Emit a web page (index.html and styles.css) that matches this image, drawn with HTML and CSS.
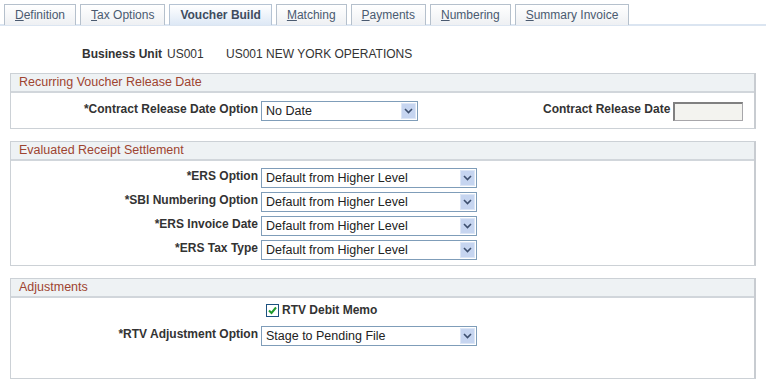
FILE: index.html
```html
<!DOCTYPE html>
<html>
<head>
  <title>Voucher Build</title>
  <link rel="stylesheet" href="styles.css">
</head>
<body>
  <div class="tabs">
    <div class="tab"><u>D</u>efinition</div>
    <div class="tab"><u>T</u>ax Options</div>
    <div class="tab active">Voucher Build</div>
    <div class="tab"><u>M</u>atching</div>
    <div class="tab"><u>P</u>ayments</div>
    <div class="tab"><u>N</u>umbering</div>
    <div class="tab"><u>S</u>ummary Invoice</div>
  </div>

  <div class="unit-row">
    <span class="unit-label">Business Unit</span>
    <span class="unit-code">US001</span>
    <span>US001 NEW YORK OPERATIONS</span>
  </div>

  <div class="group">
    <div class="group-title">Recurring Voucher Release Date</div>
    <div class="group-body body-release">
      <div class="row">
        <label class="field-label">*Contract Release Date Option</label>
        <div class="dropdown short">No Date<span class="arrow"><svg width="9" height="6" viewBox="0 0 9 6"><path d="M1 1l3.5 3.5L8 1" fill="none" stroke="#3d4f6e" stroke-width="1.6"/></svg></span></div>
        <span class="spacer"></span>
        <label class="field-label">Contract Release Date</label>
        <div class="date-box"></div>
      </div>
    </div>
  </div>

  <div class="group">
    <div class="group-title">Evaluated Receipt Settlement</div>
    <div class="group-body">
      <div class="row">
        <label class="field-label">*ERS Option</label>
        <div class="dropdown">Default from Higher Level<span class="arrow"><svg width="9" height="6" viewBox="0 0 9 6"><path d="M1 1l3.5 3.5L8 1" fill="none" stroke="#3d4f6e" stroke-width="1.6"/></svg></span></div>
      </div>
      <div class="row">
        <label class="field-label">*SBI Numbering Option</label>
        <div class="dropdown">Default from Higher Level<span class="arrow"><svg width="9" height="6" viewBox="0 0 9 6"><path d="M1 1l3.5 3.5L8 1" fill="none" stroke="#3d4f6e" stroke-width="1.6"/></svg></span></div>
      </div>
      <div class="row">
        <label class="field-label">*ERS Invoice Date</label>
        <div class="dropdown">Default from Higher Level<span class="arrow"><svg width="9" height="6" viewBox="0 0 9 6"><path d="M1 1l3.5 3.5L8 1" fill="none" stroke="#3d4f6e" stroke-width="1.6"/></svg></span></div>
      </div>
      <div class="row">
        <label class="field-label">*ERS Tax Type</label>
        <div class="dropdown">Default from Higher Level<span class="arrow"><svg width="9" height="6" viewBox="0 0 9 6"><path d="M1 1l3.5 3.5L8 1" fill="none" stroke="#3d4f6e" stroke-width="1.6"/></svg></span></div>
      </div>
    </div>
  </div>

  <div class="group">
    <div class="group-title">Adjustments</div>
    <div class="group-body body-adjust">
      <div class="row">
        <span class="field-label"></span>
        <span class="checkbox"><svg width="11" height="11" viewBox="0 0 11 11"><path d="M2 5.5l2.5 2.5L9 2.5" fill="none" stroke="#1f9a2c" stroke-width="2"/></svg></span>
        <span class="check-label">RTV Debit Memo</span>
      </div>
      <div class="row">
        <label class="field-label">*RTV Adjustment Option</label>
        <div class="dropdown">Stage to Pending File<span class="arrow"><svg width="9" height="6" viewBox="0 0 9 6"><path d="M1 1l3.5 3.5L8 1" fill="none" stroke="#3d4f6e" stroke-width="1.6"/></svg></span></div>
      </div>
    </div>
  </div>
</body>
</html>
```

FILE: styles.css
```css
body {
  margin: 0;
  font-family: "Liberation Sans", Arial, sans-serif;
  font-size: 12px;
  color: #333;
  background: #fff;
}
.tabs {
  display: flex;
  gap: 4px;
  padding: 4px 0 0 4px;
  height: 20px;
  border-bottom: 2px solid #dbe5f1;
}
.tab {
  height: 20px;
  line-height: 20px;
  padding: 0 10px;
  border: 1px solid #b5c0cc;
  border-bottom: none;
  background: linear-gradient(#ffffff, #eef0f3);
  color: #4a5a70;
}
.tab u {
  text-decoration-color: #4a5a70;
}
.tab.active {
  background: linear-gradient(#ffffff, #dde8f5);
  border-color: #b5c3d3;
  font-weight: bold;
  color: #3e4c5f;
}
.unit-row {
  display: flex;
  padding: 21px 0 0 82px;
  height: 16px;
  line-height: 14px;
}
.unit-label {
  font-weight: bold;
  margin-right: 5px;
}
.unit-code {
  width: 59px;
}
.group {
  margin: 10px 0 0 10px;
  width: 743px;
  border: 1px solid #ccd1d6;
  border-right: 2px solid #c8ccd1;
}
.group + .group {
  margin-top: 12px;
}
.group-title {
  height: 17px;
  line-height: 17px;
  padding-left: 8px;
  background: #eef2f4;
  border-bottom: 2px solid #d1d6db;
  color: #9e4430;
  font-size: 12.5px;
}
.group-body {
  padding: 5px 0 3px 0;
}
.body-release {
  padding: 6px 0 5px 0;
}
.body-adjust {
  padding: 2px 0 30px 0;
}
.row {
  display: flex;
  align-items: center;
  height: 24px;
}
.field-label {
  width: 247px;
  text-align: right;
  font-weight: bold;
  padding-right: 3px;
  flex-shrink: 0;
  color: #333;
  position: relative;
  top: -2px;
}
.dropdown {
  position: relative;
  box-sizing: border-box;
  width: 216px;
  height: 20px;
  line-height: 18px;
  border: 1px solid #7f9db9;
  padding-left: 4px;
  color: #222;
  font-size: 12.5px;
}
.dropdown.short {
  width: 157px;
}
.arrow {
  position: absolute;
  right: 1px;
  top: 1px;
  width: 15px;
  height: 16px;
  background: #c6d5f0;
  border: 1px solid #dce6f6;
  box-sizing: border-box;
  display: flex;
  align-items: center;
  justify-content: center;
}
.spacer {
  width: 125px;
}
.row .spacer + .field-label {
  width: auto;
}
.date-box {
  box-sizing: border-box;
  width: 70px;
  height: 19px;
  border: 1px solid #a7a6aa;
  border-top: 2px solid #808080;
  border-left: 2px solid #808080;
  background: #f3f3ef;
}
.checkbox {
  box-sizing: border-box;
  width: 13px;
  height: 13px;
  border: 1px solid #1c5180;
  margin-left: 5px;
  display: flex;
  align-items: center;
  justify-content: center;
  background: #fff;
  position: relative;
  top: -2px;
}
.check-label {
  margin-left: 3px;
  font-weight: bold;
  position: relative;
  top: -2px;
}
```
